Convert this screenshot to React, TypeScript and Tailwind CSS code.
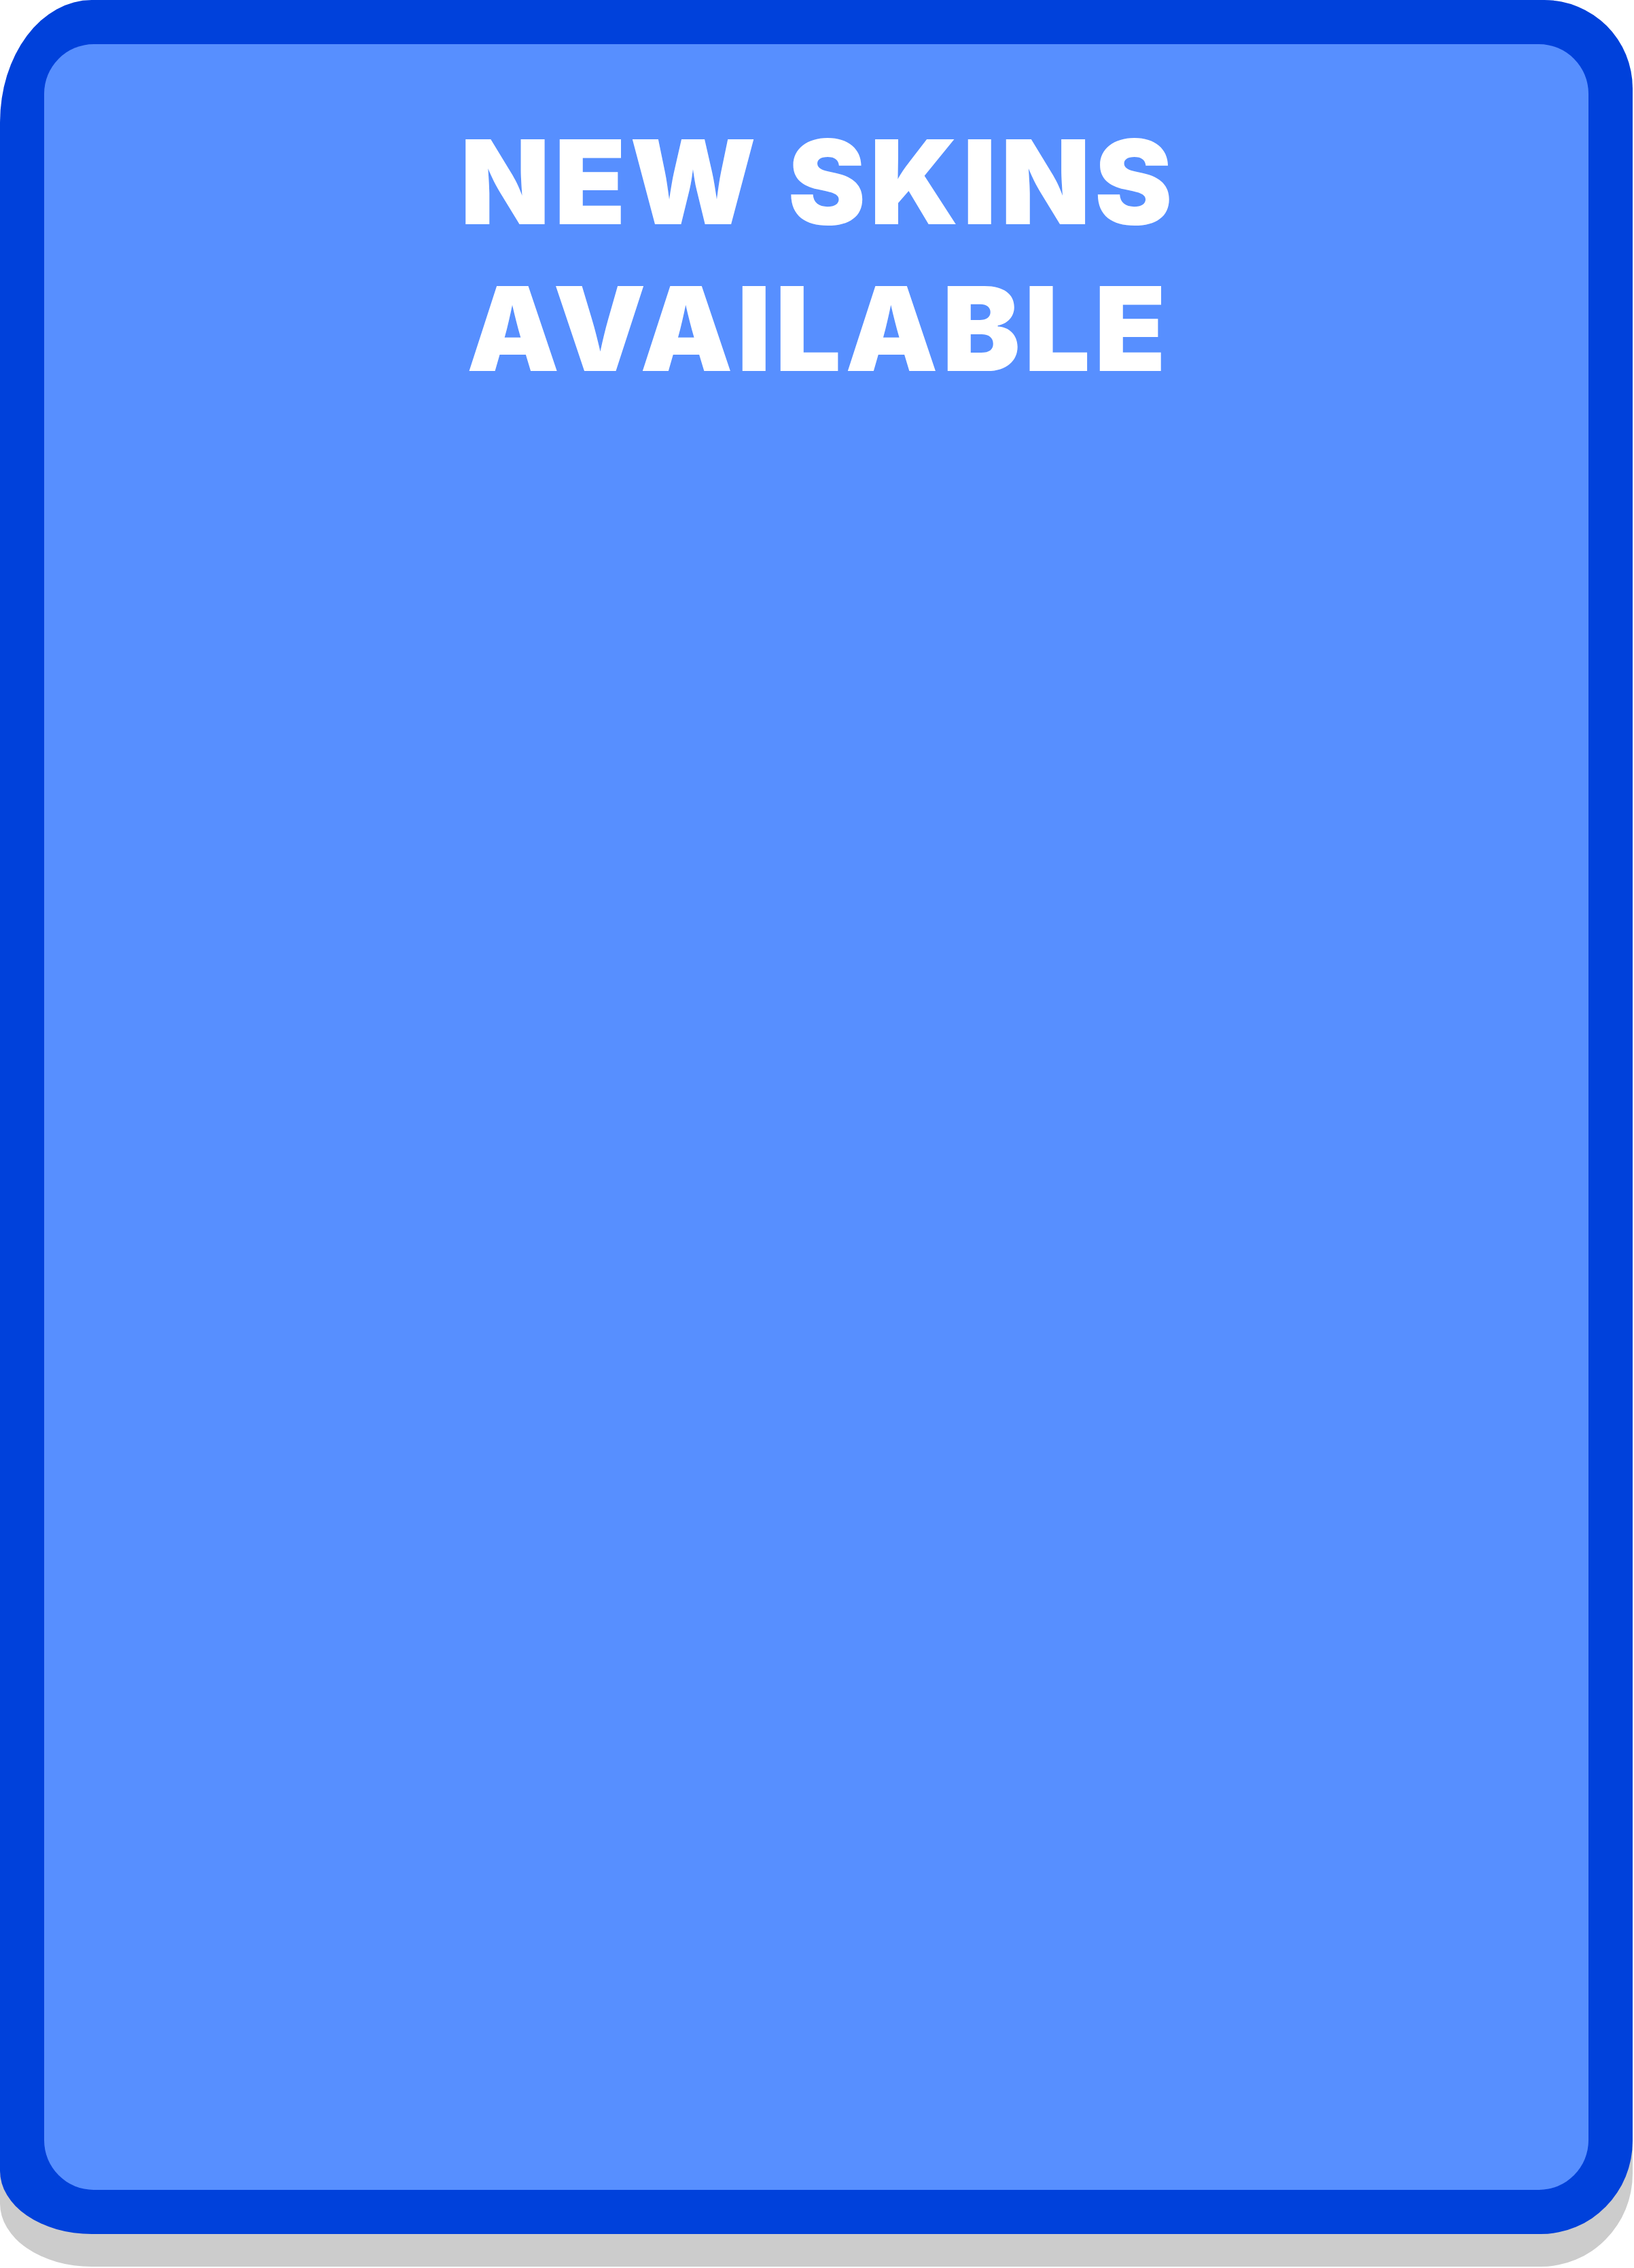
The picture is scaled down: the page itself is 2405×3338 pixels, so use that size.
export default function App() {
  return (
    <div className="w-[2405px] h-[3338px] bg-white">
      {/* Card frame with flat drop shadow */}
      <div className="w-[2403px] h-[3288px] bg-[#0041db] p-[65px] [border-radius:135px_130px_135px_135px/180px_130px_137px_93px] shadow-[0_48px_0_#cccccc]">
        <div className="h-full w-full bg-[#578fff] rounded-[73px] pt-[94px] flex flex-col items-center">
          <h1 className="text-white text-center uppercase font-black text-[172px] leading-[216px] tracking-[6px] pl-[6px] [font-family:Inter,'Noto_Sans',sans-serif]">
            <span className="block">New Skins</span>
            <span className="block">Available</span>
          </h1>
        </div>
      </div>
    </div>
  );
}
